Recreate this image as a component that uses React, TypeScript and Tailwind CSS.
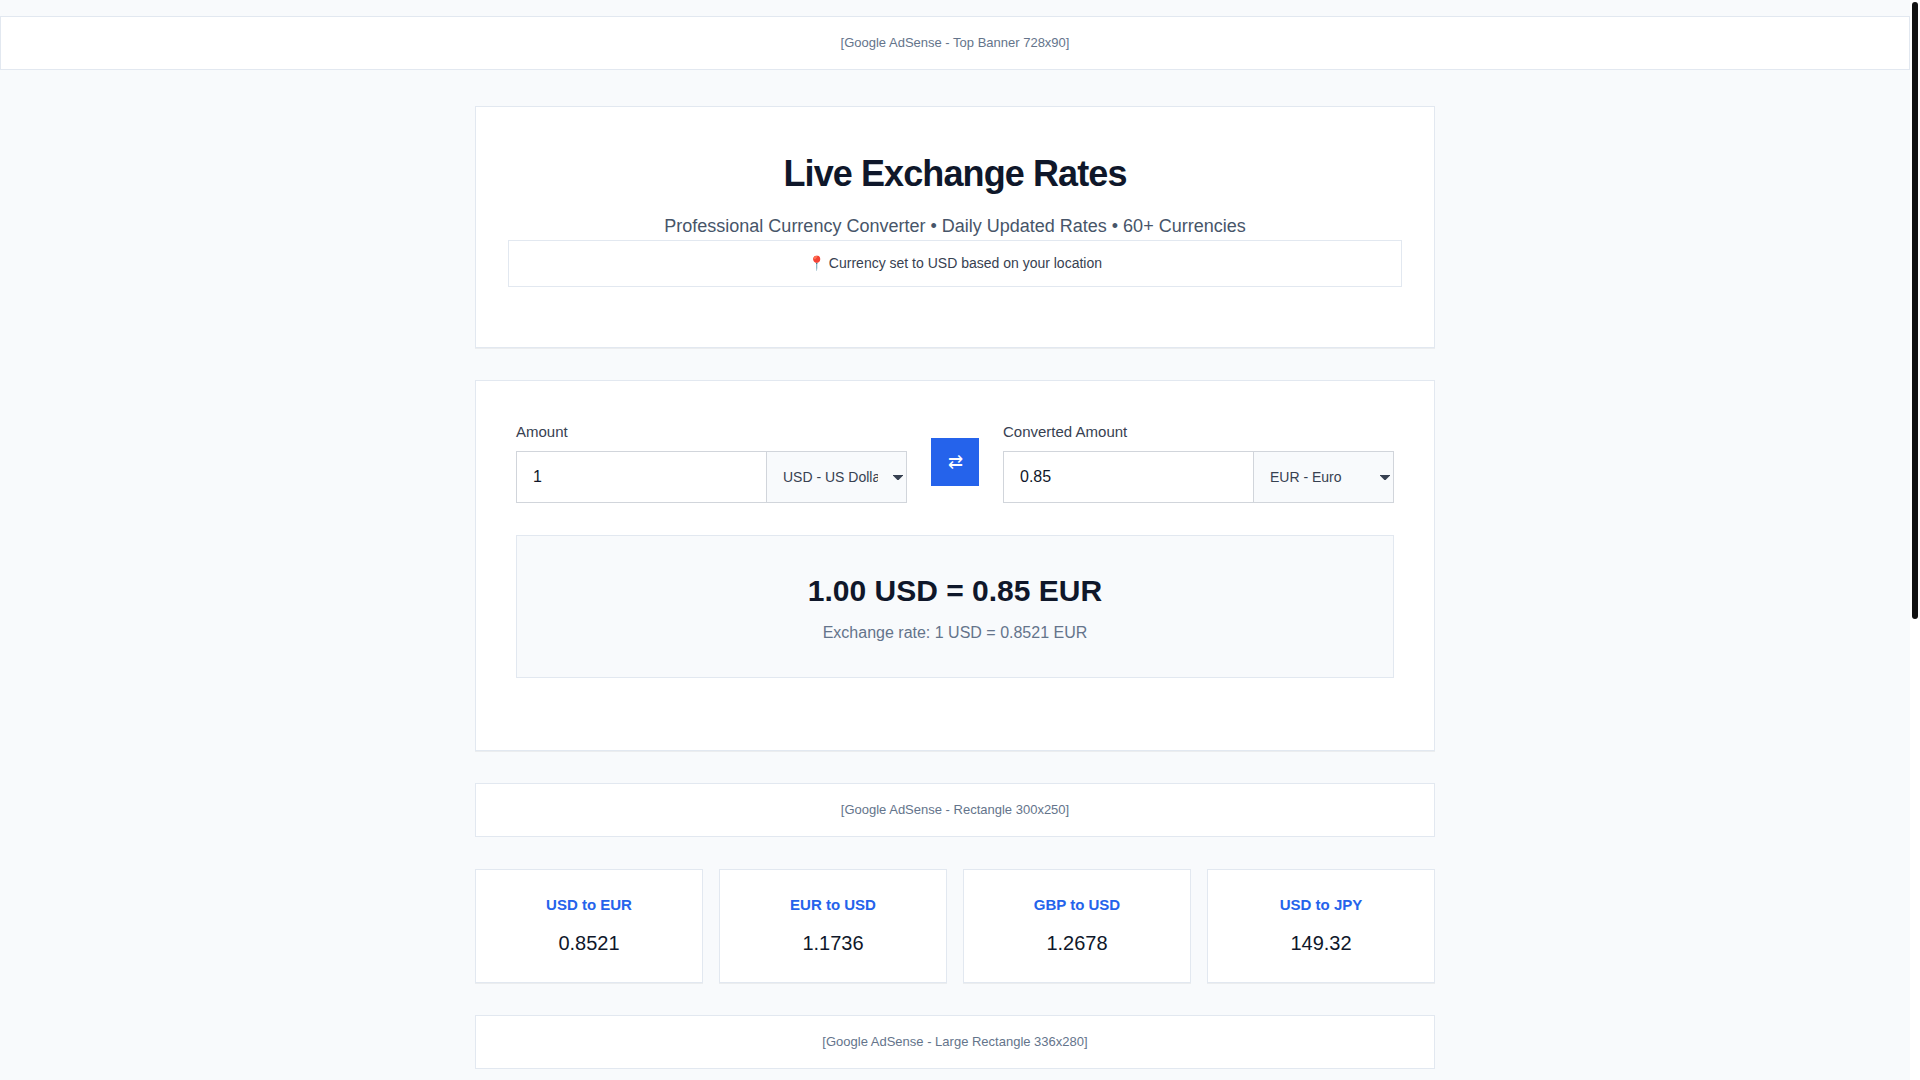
import React, { useState } from 'react';

const rates: Record<string, number> = { USD: 1, EUR: 0.8521, GBP: 0.7888, JPY: 149.32 };

const currencies = [
  { code: 'USD', name: 'US Dollar' },
  { code: 'EUR', name: 'Euro' },
  { code: 'GBP', name: 'British Pound' },
  { code: 'JPY', name: 'Japanese Yen' },
];

const popularPairs = [
  { pair: 'USD to EUR', rate: '0.8521' },
  { pair: 'EUR to USD', rate: '1.1736' },
  { pair: 'GBP to USD', rate: '1.2678' },
  { pair: 'USD to JPY', rate: '149.32' },
];

const AdSlot: React.FC<{ label: string }> = ({ label }) => (
  <div className="bg-white border border-[#e2e8f0] p-4 text-center text-[13px] leading-5 text-[#64748b]">
    [{label}]
  </div>
);

interface AmountFieldProps {
  id: string;
  label: string;
  value: string;
  currency: string;
  readOnly?: boolean;
  onValueChange?: (value: string) => void;
  onCurrencyChange: (code: string) => void;
}

const AmountField: React.FC<AmountFieldProps> = ({
  id,
  label,
  value,
  currency,
  readOnly,
  onValueChange,
  onCurrencyChange,
}) => (
  <div className="min-w-0">
    <label htmlFor={id} className="block mb-2 text-[15px] leading-[22px] text-[#374151]">
      {label}
    </label>
    <div className="flex h-[52px]">
      <input
        id={id}
        type="text"
        value={value}
        readOnly={readOnly}
        onChange={(e) => onValueChange?.(e.target.value)}
        className="flex-1 min-w-0 px-4 bg-white border border-r-0 border-[#d1d5db] text-base text-[#0f172a] outline-none"
      />
      <div className="relative flex w-[141px]">
        <select
          aria-label={`${label} currency`}
          value={currency}
          onChange={(e) => onCurrencyChange(e.target.value)}
          className="w-full appearance-none pl-4 pr-7 bg-[#f8fafc] border border-[#d1d5db] text-sm text-[#374151] outline-none"
        >
          {currencies.map((c) => (
            <option key={c.code} value={c.code}>
              {c.code} - {c.name}
            </option>
          ))}
        </select>
        <svg
          viewBox="0 0 10 6"
          aria-hidden="true"
          className="absolute right-1 inset-y-0 my-auto w-2.5 h-1.5 fill-[#374151] pointer-events-none"
        >
          <path d="M0 1h10v.6L5.6 6h-1.2L0 1.6z" />
        </svg>
      </div>
    </div>
  </div>
);

const App: React.FC = () => {
  const [amount, setAmount] = useState('1');
  const [from, setFrom] = useState('USD');
  const [to, setTo] = useState('EUR');

  const rate = rates[to] / rates[from];
  const total = (Number(amount) || 0) * rate;

  const handleSwap = () => {
    setFrom(to);
    setTo(from);
  };

  return (
    <div className="flex h-screen overflow-hidden bg-[#f8fafc] font-['Liberation_Sans',Arial,sans-serif] text-[#0f172a]">
      <div className="flex-1 min-w-0 overflow-hidden pt-4">
        <AdSlot label="Google AdSense - Top Banner 728x90" />

        <main className="max-w-[960px] mx-auto mt-9 flex flex-col gap-8">
          {/* Header */}
          <header className="bg-white border border-[#e2e8f0] shadow-[0_1px_0_rgba(0,0,0,0.05)] px-8 pt-10 pb-[60px] text-center">
            <h1 className="mb-3 text-4xl leading-[54px] font-bold tracking-tight">Live Exchange Rates</h1>
            <p className="text-lg leading-[27px] text-[#475569]">
              Professional Currency Converter • Daily Updated Rates • 60+ Currencies
            </p>
            <div className="border border-[#e2e8f0] p-3 text-sm leading-[21px] text-[#374151]">
              📍 Currency set to USD based on your location
            </div>
          </header>

          {/* Converter */}
          <section className="bg-white border border-[#e2e8f0] shadow-[0_1px_0_rgba(0,0,0,0.05)] px-10 pt-10 pb-[72px]">
            <div className="grid grid-cols-[1fr_auto_1fr] items-center gap-6 mb-8">
              <AmountField
                id="amount"
                label="Amount"
                value={amount}
                currency={from}
                onValueChange={setAmount}
                onCurrencyChange={setFrom}
              />
              <button
                type="button"
                aria-label="Swap currencies"
                onClick={handleSwap}
                className="size-12 bg-[#2563eb] text-lg text-white cursor-pointer"
              >
                ⇄
              </button>
              <AmountField
                id="converted"
                label="Converted Amount"
                value={total.toFixed(2)}
                currency={to}
                readOnly
                onCurrencyChange={setTo}
              />
            </div>

            <div className="bg-[#f8fafc] border border-[#e2e8f0] p-8 text-center">
              <div className="mb-2 text-3xl leading-[45px] font-bold">
                {(Number(amount) || 0).toFixed(2)} {from} = {total.toFixed(2)} {to}
              </div>
              <div className="text-base text-[#64748b]">
                Exchange rate: 1 {from} = {rate.toFixed(4)} {to}
              </div>
            </div>
          </section>

          <AdSlot label="Google AdSense - Rectangle 300x250" />

          {/* Popular pairs */}
          <section className="grid grid-cols-4 gap-4">
            {popularPairs.map(({ pair, rate: value }) => (
              <div
                key={pair}
                className="bg-white border border-[#e2e8f0] shadow-[0_1px_0_rgba(0,0,0,0.05)] p-6 text-center"
              >
                <h2 className="mb-3 text-[15px] leading-[22px] font-bold text-[#2563eb]">{pair}</h2>
                <div className="text-xl leading-[30px]">{value}</div>
              </div>
            ))}
          </section>

          <AdSlot label="Google AdSense - Large Rectangle 336x280" />
        </main>
      </div>

      {/* Scroll track */}
      <div className="w-[10px] shrink-0 bg-white p-0.5">
        <div className="h-[617px] rounded-full bg-[#111111]" />
      </div>
    </div>
  );
};

export default App;
